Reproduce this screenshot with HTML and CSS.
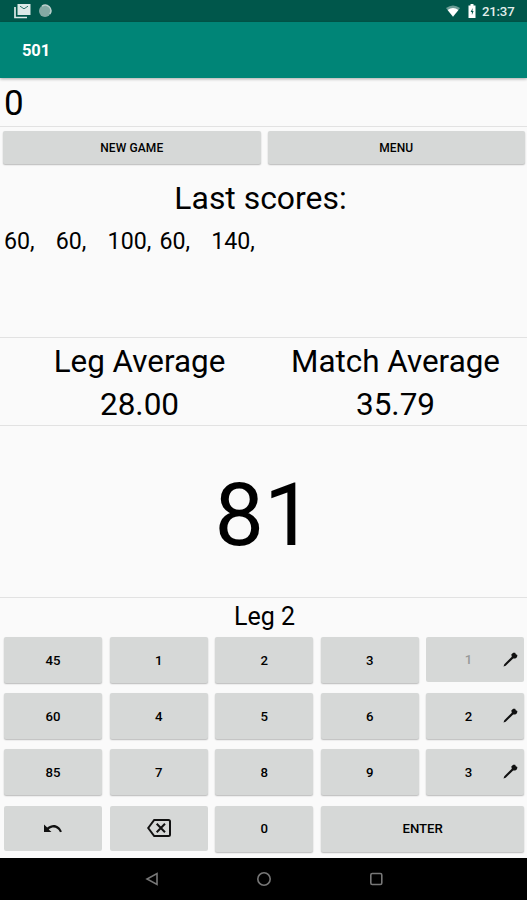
FILE: index.html
```html
<!DOCTYPE html>
<html lang="en">
<head>
<meta charset="utf-8">
<title>501</title>
<link rel="stylesheet" href="styles.css">
</head>
<body>
<svg class="defs" aria-hidden="true">
  <symbol id="dart" viewBox="0 0 15 15"><path d="M.5 14.500 1.300 12.300 8.800 4.800 8.300 2.500 10.200 .8 12.200 .7 12.800 2.300 14.400 3 14 5.300 12.300 6.500 10.200 6.500 2.700 13.800Z"/></symbol>
</svg>
<header class="status">
  <svg class="mail" viewBox="0 0 17 16"><path d="M1 4v10.5h12" fill="none" stroke="#dce9e7" stroke-width="1.7"/><path d="M3.5 1h13v11h-13z" fill="#dce9e7"/><path d="M6 3.2l4 2.6 4-2.6" fill="none" stroke="#00574b" stroke-width=".8"/></svg>
  <svg class="sync" viewBox="0 0 14 14"><circle cx="7" cy="7" r="6" fill="#83aaa4"/><path d="M4 2.2a5.6 5.6 0 0 1 7.8 7.8" fill="none" stroke="#bcd0cd" stroke-width="1.5"/></svg>
  <svg class="wifi" viewBox="0 0 14 12"><path d="M0 3Q7-2 14 3L7 12Z" fill="#6d9d96"/><path d="M1.6 5Q7 1 12.4 5L7 11.5Z" fill="#fff"/></svg>
  <svg class="battery" viewBox="0 0 8 14"><path d="M2.5 0h3v1.5H7.5V14H.5V1.5h2z" fill="#fff"/><path d="M4.7 4 2.6 8h1.3v3L5.6 7H4.4z" fill="#00574b"/></svg>
  <span class="clock">21:37</span>
</header>
<div class="toolbar">501</div>
<main>
  <div class="entry">0</div>
  <div class="actions"><button>NEW GAME</button><button>MENU</button></div>
  <section class="last">
    <h2>Last scores:</h2>
    <p class="scores"><span>60,</span><span>60,</span><span>100,</span><span>60,</span><span>140,</span></p>
  </section>
  <section class="averages">
    <div><h2>Leg Average</h2><p>28.00</p></div>
    <div><h2>Match Average</h2><p>35.79</p></div>
  </section>
  <div class="remaining">81</div>
  <div class="leg">Leg 2</div>
  <div class="keypad">
    <button>45</button><button>1</button><button>2</button><button>3</button>
    <button class="darts" disabled><span>1</span><svg class="dart"><use href="#dart"/></svg></button>
    <button>60</button><button>4</button><button>5</button><button>6</button>
    <button class="darts"><span>2</span><svg class="dart"><use href="#dart"/></svg></button>
    <button>85</button><button>7</button><button>8</button><button>9</button>
    <button class="darts"><span>3</span><svg class="dart"><use href="#dart"/></svg></button>
    <button class="flat" aria-label="Undo"><svg class="undo" viewBox="0 0 18 9"><path d="M0 .5V8h7.5L4.700 5.500C9 2.200 13.500 3.300 16 8.200L18 7.600C15 .2 8.500-1 3.200 3.600Z"/></svg></button>
    <button class="flat" aria-label="Delete"><svg class="erase" viewBox="0 0 24 18"><path d="M7.2 1H21.5Q23 1 23 2.5V15.500Q23 17 21.500 17H7.200L1.200 9Z M9.700 4.800 18 13.200M18 4.800 9.700 13.200"/></svg></button>
    <button>0</button><button class="enter">ENTER</button>
  </div>
</main>
<nav>
  <svg viewBox="0 0 14 14"><path d="M12 1.500v11L2 7Z"/></svg>
  <svg viewBox="0 0 14 14"><circle cx="7" cy="7" r="6.200"/></svg>
  <svg viewBox="0 0 14 14"><rect x="1.800" y="1.500" width="11" height="11" rx="1.500"/></svg>
</nav>
</body>
</html>
```
FILE: styles.css
```css
* { box-sizing: border-box; }
body { margin: 0; width: 527px; height: 900px; overflow: hidden; display: flex; flex-direction: column; background: #fafafa; color: #000; font-family: Roboto, sans-serif; }
h2, p { margin: 0; font-weight: 400; }
.defs { display: none; }
.status { height: 22px; flex: none; display: flex; align-items: center; padding: 0 13px 0 14px; background: #00574b; color: #e3eeec; }
.mail { width: 17px; height: 16px; }
.sync { width: 14px; height: 14px; margin-left: 7px; }
.wifi { width: 14px; height: 12px; margin-left: auto; }
.battery { width: 8px; height: 14px; margin: 0 6px 0 8px; }
.clock { font-size: 13.200px; font-weight: 500; line-height: 23px; height: 22px; width: 32px; white-space: nowrap; letter-spacing: -.2px; }
.toolbar { height: 56px; flex: none; padding-left: 22px; background: #008577; color: #fff; font-size: 16.500px; font-weight: 700; line-height: 58px; letter-spacing: -.1px; box-shadow: 0 1px 3px #0005; }
main { flex: 1; display: flex; flex-direction: column; }
.entry { height: 49px; border-bottom: 1px solid #e2e2e2; padding-left: 4px; font-size: 35px; line-height: 52px; }
button { border: 0; padding: 0; border-radius: 2px; background: #d6d8d7; color: #000; font: 500 13.200px Roboto, sans-serif; box-shadow: 0 1px 1.500px #0004; }
.actions { display: grid; grid-template-columns: 1fr 1fr; gap: 7px; padding: 4px 2px 0 3px; height: 37px; }
.actions button { font-size: 12px; letter-spacing: .1px; }
.last { height: 174px; border-bottom: 1px solid #e2e2e2; }
.last h2 { padding: 16px 6px 0 0; text-align: center; font-size: 31.900px; line-height: 36px; }
.scores { display: grid; grid-template-columns: repeat(5, 51.800px); padding: 11px 0 0 4px; font-size: 23.200px; line-height: 28px; }
.averages { height: 88px; border-bottom: 1px solid #e2e2e2; display: grid; grid-template-columns: 279px 1fr; padding-top: 2px; font-size: 31.500px; text-align: center; line-height: 43px; }
.averages h2 { font-size: 31.400px; }
.averages > div:last-child { padding-right: 15px; }
.remaining { height: 172px; border-bottom: 1px solid #e2e2e2; padding-left: 1px; font-size: 88px; line-height: 177px; text-align: center; }
.leg { height: 38px; padding-left: 2px; font-size: 25px; line-height: 37px; text-align: center; }
.keypad { flex: 1; display: grid; grid-template-columns: repeat(5, 1fr); grid-auto-rows: 46px; gap: 10.200px 7.500px; padding: 1px 2.500px 0 4px; }
.enter { grid-column: span 2; }
.flat, button:disabled { box-shadow: none; height: 45px; }
.darts { display: grid; grid-template-columns: 84px 1fr; position: relative; align-items: center; }
.darts:disabled { color: #989a99; }
.dart { position: absolute; right: 6px; top: 15px; width: 15px; height: 15px; fill: #111; }
.undo { width: 18px; height: 9px; fill: #111; }
.erase { width: 24px; height: 18px; fill: none; stroke: #111; stroke-width: 2; vertical-align: middle; }
nav { height: 42px; flex: none; background: #000; display: flex; justify-content: center; align-items: center; gap: 98px; }
nav svg { width: 14px; height: 14px; fill: none; stroke: #777; stroke-width: 1.600; }
```
